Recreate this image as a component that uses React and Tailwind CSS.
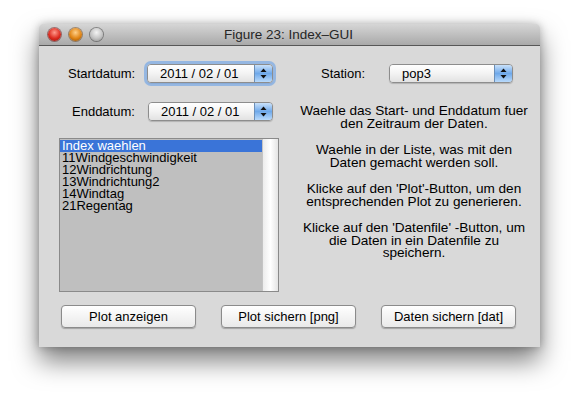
import { useState } from "react";

const INDICES = [
  "Index waehlen",
  "11Windgeschwindigkeit",
  "12Windrichtung",
  "13Windrichtung2",
  "14Windtag",
  "21Regentag",
];

const HELP = [
  ["Waehle das Start- und Enddatum fuer", "den Zeitraum der Daten."],
  ["Waehle in der Liste, was mit den", "Daten gemacht werden soll."],
  ["Klicke auf den 'Plot'-Button, um den", "entsprechenden Plot zu generieren."],
  ["Klicke auf den 'Datenfile' -Button, um", "die Daten in ein Datenfile zu", "speichern."],
];

function Stepper() {
  return (
    <svg width="7" height="11" viewBox="0 0 7 11">
      <path d="M3.5 0.5 L6.5 4 L0.5 4 Z" fill="#111" />
      <path d="M3.5 10.5 L6.5 7 L0.5 7 Z" fill="#111" />
    </svg>
  );
}

// Aqua-style popup menu button
function Popup({ value, width, focused }) {
  return (
    <div
      className={`flex h-[19px] ${width} items-stretch overflow-hidden rounded-[4px] border border-[#8d8d8d] shadow-[0_1px_1px_rgba(0,0,0,0.18)] ${
        focused ? "ring-[3px] ring-[#78a8e6]/70" : ""
      }`}
    >
      <div className="flex flex-1 items-center bg-gradient-to-b from-[#ffffff] via-[#f3f3f3] to-[#e2e2e2] pl-[12px] text-[13px] leading-none text-black">
        {value}
      </div>
      <div className="flex w-[18px] items-center justify-center border-l border-[#6b8fb8] bg-gradient-to-b from-[#c9e1fa] via-[#6fa9ea] to-[#b9dafb]">
        <Stepper />
      </div>
    </div>
  );
}

function Light({ color }) {
  return <div className={`h-[13px] w-[13px] rounded-full ${color}`} />;
}

function PushButton({ children }) {
  return (
    <button className="h-[23px] w-[135px] rounded-[4px] border border-[#8b8b8b] bg-gradient-to-b from-[#ffffff] to-[#e9e9e9] text-[13px] leading-none text-black shadow-[0_1px_1px_rgba(0,0,0,0.25)]">
      {children}
    </button>
  );
}

export default function App() {
  const [selected, setSelected] = useState(0);

  return (
    <div
      className="min-h-[402px] w-[580px] bg-white pl-[39px] pt-[24px]"
      style={{ fontFamily: '"Liberation Sans", Arial, sans-serif' }}
    >
      <div className="flex h-[323px] w-[501px] flex-col overflow-hidden rounded-t-[5px] bg-[#d9d9d9] shadow-[0_14px_26px_rgba(0,0,0,0.5),0_0_9px_rgba(0,0,0,0.25)]">
        {/* title bar */}
        <div className="relative flex h-[22px] shrink-0 items-center border-b border-[#575757] bg-gradient-to-b from-[#d6d6d6] to-[#a9a9a9]">
          <div className="flex items-center gap-[8px] pl-[9px]">
            <Light color="bg-[radial-gradient(circle_at_50%_35%,#ff9a8c,#dc2a1f_55%,#8e120c)] shadow-[0_0_0_1px_rgba(90,0,0,0.45)]" />
            <Light color="bg-[radial-gradient(circle_at_50%_35%,#ffd08a,#e08516_55%,#8a4b05)] shadow-[0_0_0_1px_rgba(100,50,0,0.45)]" />
            <Light color="bg-[radial-gradient(circle_at_50%_35%,#f4f4f4,#c4c4c4_55%,#8d8d8d)] shadow-[0_0_0_1px_rgba(0,0,0,0.35)]" />
          </div>
          <div className="flex-1 pr-[66px] text-center text-[13.5px] leading-none text-[#262626]">
            Figure 23: Index–GUI
          </div>
        </div>

        {/* body */}
        <div className="flex flex-col">
          <div className="mt-[17px] flex h-[20px] items-center pl-[29px]">
            <span className="w-[79px] text-[13px] leading-none">Startdatum:</span>
            <Popup value="2011 / 02 / 01" width="w-[126px]" focused />
            <span className="ml-[48px] w-[68px] text-[13px] leading-none">Station:</span>
            <Popup value="pop3" width="w-[124px]" />
          </div>

          <div className="flex">
            <div className="flex w-[249px] flex-col">
              <div className="mt-[18px] flex h-[20px] items-center pl-[33px]">
                <span className="w-[76px] text-[13px] leading-none">Enddatum:</span>
                <Popup value="2011 / 02 / 01" width="w-[125px]" />
              </div>

              {/* index list */}
              <div className="ml-[20px] mt-[17px] flex h-[154px] w-[220px] border border-[#8a8a8a] bg-[#bfbfbf]">
                <div className="flex flex-1 flex-col pt-[1px]">
                  {INDICES.map((item, i) => (
                    <div
                      key={item}
                      onClick={() => setSelected(i)}
                      className={`h-[12px] pl-[2px] text-[13px] leading-[12px] ${
                        selected === i ? "bg-[#3a74d8] text-white" : "text-black"
                      }`}
                    >
                      {item}
                    </div>
                  ))}
                </div>
                <div className="w-[16px] border-l border-[#c4c4c4] bg-gradient-to-r from-[#ececec] via-white to-[#e4e4e4]" />
              </div>
            </div>

            {/* help text */}
            <div className="flex w-[252px] flex-col pt-[22px] text-center text-[13.6px] leading-[12.5px] text-black">
              {HELP.map((lines, i) => (
                <div key={i} className={i > 0 ? "mt-[14px]" : ""}>
                  {lines.map((l) => (
                    <div key={l}>{l}</div>
                  ))}
                </div>
              ))}
            </div>
          </div>

          <div className="ml-[22px] mt-[13px] flex gap-[25px]">
            <PushButton>Plot anzeigen</PushButton>
            <PushButton>Plot sichern [png]</PushButton>
            <PushButton>Daten sichern [dat]</PushButton>
          </div>
        </div>
      </div>
    </div>
  );
}
